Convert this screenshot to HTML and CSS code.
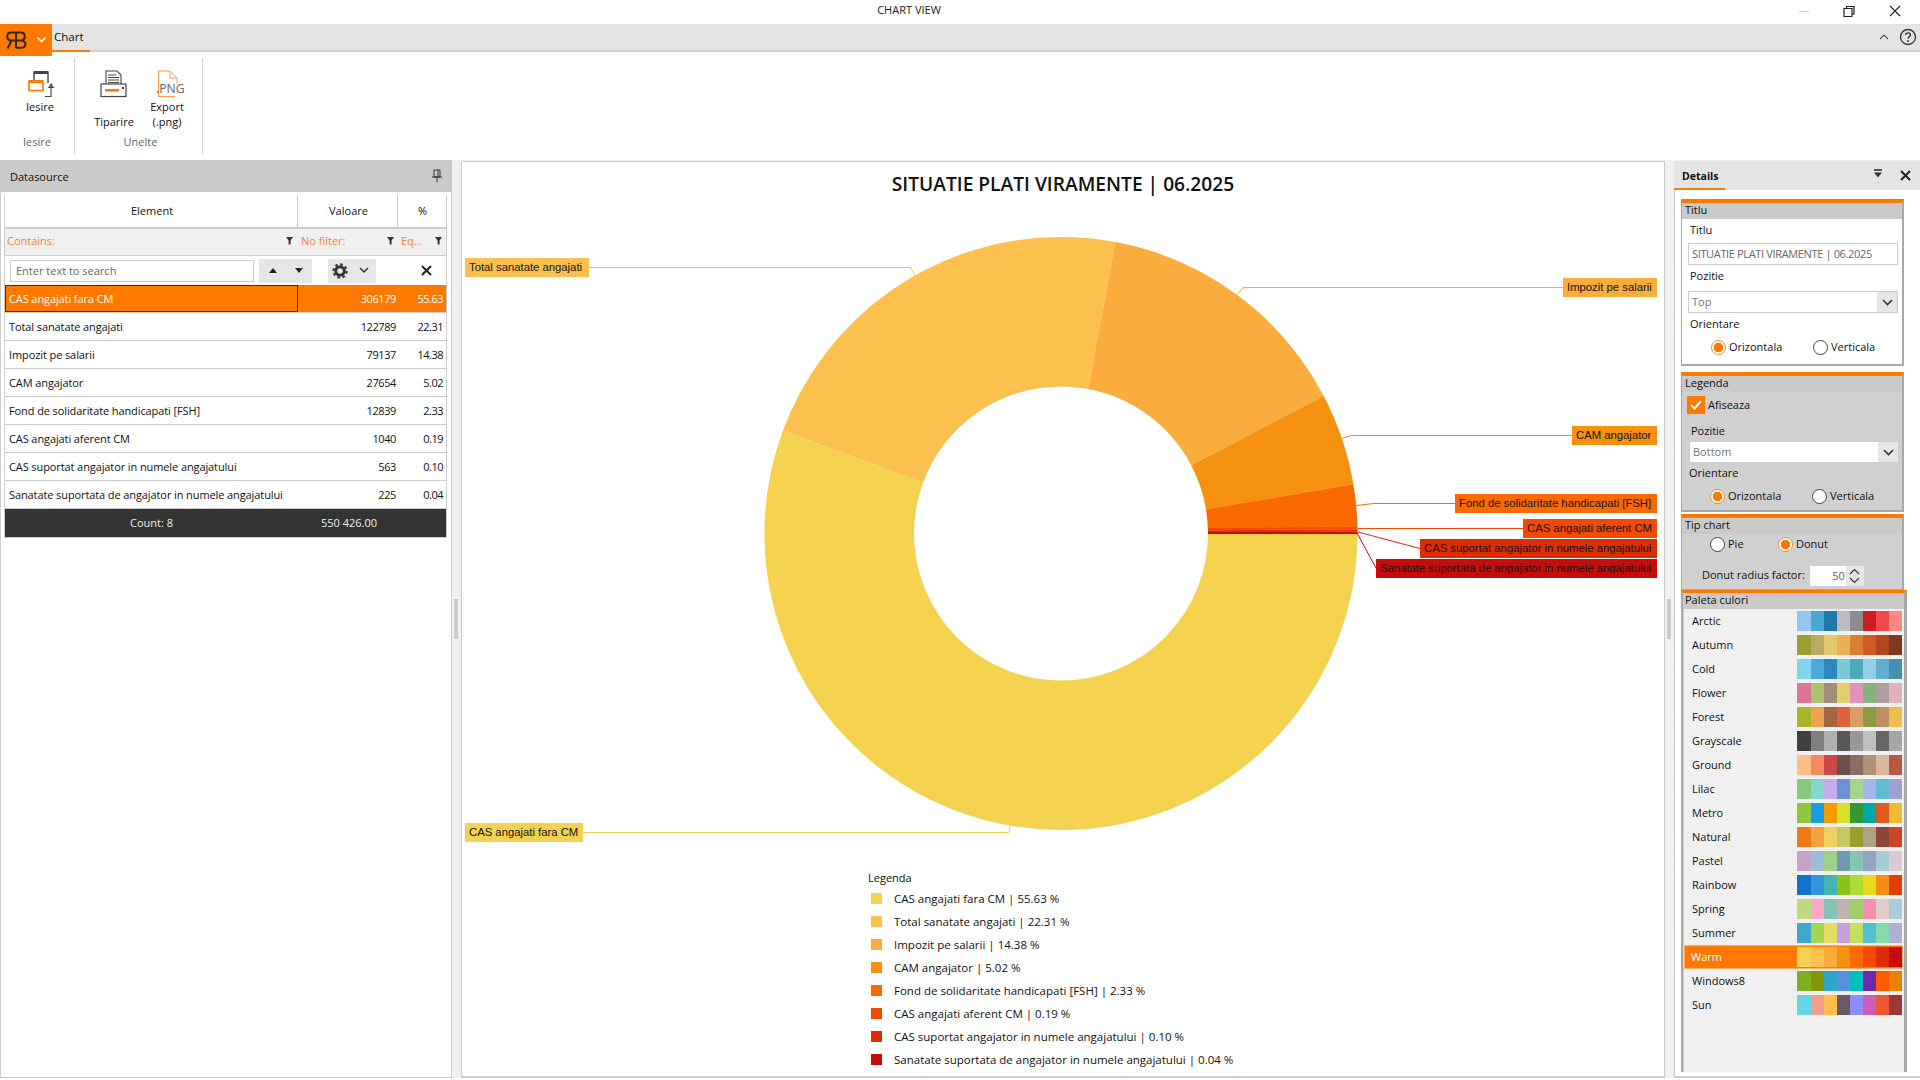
FILE: index.html
```html
<!DOCTYPE html>
<html lang="ro">
<head>
<meta charset="utf-8">
<title>CHART VIEW</title>
<link rel="stylesheet" href="styles.css">
</head>
<body>
<header class="titlebar">
  <span class="titlebar-text">CHART VIEW</span>
  <div class="winbtns">
    <svg class="winbtn" width="46" height="24" viewBox="0 0 46 24"><path d="M17 11.5H27" stroke="#c8c8c8" fill="none"/></svg>
    <svg class="winbtn" width="46" height="24" viewBox="0 0 46 24"><path d="M16 8.5H24V16.5H16ZM18.5 8.5V6.5H26V14H24" stroke="#222" stroke-width="1.2" fill="none"/></svg>
    <svg class="winbtn" width="46" height="24" viewBox="0 0 46 24"><path d="M16 6L26 16M26 6L16 16" stroke="#222" stroke-width="1.1" fill="none"/></svg>
  </div>
</header>

<nav class="tabs">
  <div class="appbtn">
    <svg width="52" height="32" viewBox="0 0 52 32">
      <path d="M20 8.5H11.5C8.3 8.5 7.2 10.6 7.2 12.6S8.5 16.6 11.5 16.6H16M16 7.5V24M11.5 16.6L7.5 24.5M16 8.5H20.5C23.6 8.5 24.8 10.2 24.8 12.4S23.6 16.4 20.5 16.4H16M20.5 16.4C24.2 16.4 25.4 18.2 25.4 20.2S23.8 23.8 20.5 23.8H16" fill="none" stroke="#33291f" stroke-width="2"/>
      <path d="M37.5 13.5L41.5 17.5L45.5 13.5" fill="none" stroke="#fff" stroke-width="1.6"/>
    </svg>
  </div>
  <div class="tab">Chart</div>
  <div class="tabs-right">
    <svg width="12" height="10" viewBox="0 0 12 10"><path d="M2 7L6 3L10 7" fill="none" stroke="#555" stroke-width="1.1"/></svg>
    <svg width="18" height="18" viewBox="0 0 18 18"><circle cx="9" cy="9" r="7.5" fill="none" stroke="#333" stroke-width="1.3"/><path d="M6.6 7C6.7 5.6 7.7 4.9 9 4.9S11.4 5.8 11.4 7C11.4 8.7 9 8.8 9 10.6" fill="none" stroke="#333" stroke-width="1.4"/><circle cx="9" cy="13" r=".95" fill="#333"/></svg>
  </div>
</nav>

<section class="ribbon">
  <div class="rgroup rgroup-a">
    <div class="rbuttons">
      <div class="rbtn rbtn-a">
        <svg width="28" height="28" viewBox="0 0 28 28">
          <path d="M6 11V2H20V13" fill="none" stroke="#444" stroke-width="1.4"/>
          <path d="M6 2.5H20" stroke="#444" stroke-width="3"/>
          <rect x="1" y="11" width="14" height="9.5" fill="#fff" stroke="#ff7800" stroke-width="1.6"/>
          <path d="M1 11.5H15" stroke="#ff7800" stroke-width="3"/>
          <path d="M17 26.5H23V15M20.8 17.5L23 14L25.2 17.5Z" fill="none" stroke="#444" stroke-width="1.1"/>
        </svg>
        <span class="rlabel">Iesire</span>
      </div>
    </div>
    <div class="gname">Iesire</div>
  </div>
  <div class="rgroup rgroup-b">
    <div class="rbuttons">
      <div class="rbtn rbtn-b">
        <svg width="28" height="28" viewBox="0 0 28 28">
          <path d="M6 14V1H17L21 5V14" fill="#fff" stroke="#444" stroke-width="1.1"/>
          <path d="M8 5H16M8 7.5H19M8 10H19M8 12.5H19" stroke="#444" stroke-width="1"/>
          <rect x="1" y="14" width="25" height="12.5" fill="#fff" stroke="#444" stroke-width="1.2"/>
          <rect x="5" y="19" width="14" height="2.6" fill="#ff7800"/>
          <rect x="22" y="17" width="2" height="2" fill="#444"/>
        </svg>
        <span class="rlabel"><br>Tiparire</span>
      </div>
      <div class="rbtn rbtn-c">
        <svg width="30" height="28" viewBox="0 0 30 28">
          <path d="M6 26.5H3.5V1H15L22 8V14M15 1V8H22M20 26.5H6" fill="none" stroke="#ff9a40" stroke-width="1"/>
          <text class="png-text" x="1" y="23">.PNG</text>
        </svg>
        <span class="rlabel">Export<br>(.png)</span>
      </div>
    </div>
    <div class="gname">Unelte</div>
  </div>
</section>

<main class="main">
  <aside class="left">
    <div class="left-head">
      <span>Datasource</span>
      <svg width="12" height="14" viewBox="0 0 12 14"><path d="M3 1H9V8H3ZM1 8H11M6 8V13.5M7 1V8" fill="none" stroke="#333" stroke-width="1"/></svg>
    </div>
    <div class="grid">
      <div class="row head-row">
        <div class="hcell">Element</div>
        <div class="hcell">Valoare</div>
        <div class="hcell hcell-last">%</div>
      </div>
      <div class="row filter-row">
        <div class="fcell"><span>Contains:</span><svg class="funnel" width="8" height="8" viewBox="0 0 8 8"><path d="M0 0H7L4.6 3.4V7.5H2.6V3.4Z" fill="#333"/></svg></div>
        <div class="fcell"><span>No filter:</span><svg class="funnel" width="8" height="8" viewBox="0 0 8 8"><path d="M0 0H7L4.6 3.4V7.5H2.6V3.4Z" fill="#333"/></svg></div>
        <div class="fcell"><span>Eq...</span><svg class="funnel" width="8" height="8" viewBox="0 0 8 8"><path d="M0 0H7L4.6 3.4V7.5H2.6V3.4Z" fill="#333"/></svg></div>
      </div>
      <div class="searchbar">
        <div class="search-input">Enter text to search</div>
        <div class="sbtns">
          <svg width="8" height="5" viewBox="0 0 8 5"><path d="M0 5L4 0L8 5Z" fill="#222"/></svg>
          <svg width="8" height="5" viewBox="0 0 8 5"><path d="M0 0H8L4 5Z" fill="#222"/></svg>
        </div>
        <div class="gearbtn">
          <svg width="16" height="16" viewBox="0 0 16 16"><circle cx="8" cy="8" r="4.3" fill="none" stroke="#333" stroke-width="3"/><circle cx="8" cy="8" r="6.6" fill="none" stroke="#333" stroke-width="2.2" stroke-dasharray="2.6 2.58"/></svg>
          <svg width="10" height="7" viewBox="0 0 10 7"><path d="M1 1L5 5L9 1" fill="none" stroke="#333" stroke-width="1.5"/></svg>
        </div>
        <svg class="search-x" width="11" height="11" viewBox="0 0 11 11"><path d="M1 1L10 10M10 1L1 10" stroke="#222" stroke-width="2"/></svg>
      </div>
      <div class="row data-row selected"><div class="cell cell-name focused">CAS angajati fara CM</div><div class="cell cell-num">306179</div><div class="cell cell-pct">55.63</div></div>
      <div class="row data-row"><div class="cell cell-name">Total sanatate angajati</div><div class="cell cell-num">122789</div><div class="cell cell-pct">22.31</div></div>
      <div class="row data-row"><div class="cell cell-name">Impozit pe salarii</div><div class="cell cell-num">79137</div><div class="cell cell-pct">14.38</div></div>
      <div class="row data-row"><div class="cell cell-name">CAM angajator</div><div class="cell cell-num">27654</div><div class="cell cell-pct">5.02</div></div>
      <div class="row data-row"><div class="cell cell-name">Fond de solidaritate handicapati [FSH]</div><div class="cell cell-num">12839</div><div class="cell cell-pct">2.33</div></div>
      <div class="row data-row"><div class="cell cell-name">CAS angajati aferent CM</div><div class="cell cell-num">1040</div><div class="cell cell-pct">0.19</div></div>
      <div class="row data-row"><div class="cell cell-name">CAS suportat angajator in numele angajatului</div><div class="cell cell-num">563</div><div class="cell cell-pct">0.10</div></div>
      <div class="row data-row"><div class="cell cell-name">Sanatate suportata de angajator in numele angajatului</div><div class="cell cell-num">225</div><div class="cell cell-pct">0.04</div></div>
      <div class="row foot-row"><div class="fcount">Count: 8</div><div class="fcount">550 426.00</div><div></div></div>
    </div>
  </aside>

  <div class="splitter"><div class="grip"></div></div>

  <section class="chart">
    <h1 class="chart-title">SITUATIE PLATI VIRAMENTE | 06.2025</h1>
    <svg class="plot" width="1202" height="663" viewBox="462 207 1202 663">
      <g fill="none" stroke-width="149.5">
        <circle cx="1061" cy="533.5" r="221.75" pathLength="100" stroke="#f4d250" stroke-dasharray="55.63 44.37"/>
        <circle cx="1061" cy="533.5" r="221.75" pathLength="100" stroke="#fbc04e" stroke-dasharray="22.31 77.69" stroke-dashoffset="-55.63"/>
        <circle cx="1061" cy="533.5" r="221.75" pathLength="100" stroke="#faac3c" stroke-dasharray="14.38 85.62" stroke-dashoffset="-77.94"/>
        <circle cx="1061" cy="533.5" r="221.75" pathLength="100" stroke="#f6900f" stroke-dasharray="5.02 94.98" stroke-dashoffset="-92.32"/>
        <circle cx="1061" cy="533.5" r="221.75" pathLength="100" stroke="#fb6a00" stroke-dasharray="2.33 97.67" stroke-dashoffset="-97.34"/>
      </g>
      <polygon points="1357.5,527 1357.5,529.4 1208,530.2 1208,528.3" fill="#f34a00"/>
      <polygon points="1357.5,529.4 1357.5,531.7 1208,532.1 1208,530.2" fill="#dd2e03"/>
      <polygon points="1357.5,531.7 1357.5,534 1208,534 1208,532.1" fill="#c90c0a"/>
      <g fill="none">
        <path d="M589 267.5H910.5L915 276" stroke="#fbc04e"/>
        <path d="M1563 287.5H1243L1237 295" stroke="#faac3c"/>
        <path d="M1572 435.5H1351L1342 438.5" stroke="#f6900f"/>
        <path d="M1455 503.5H1374L1356 505.5" stroke="#fb6a00"/>
        <path d="M1523 528.5H1358" stroke="#f34a00"/>
        <path d="M1420 548.5L1358 532" stroke="#dd2e03"/>
        <path d="M1376 568L1357 533" stroke="#c90c0a"/>
        <path d="M583 832.5H1009L1010 825" stroke="#f4d250"/>
      </g>
      <rect x="465" y="258" width="124" height="19" fill="#fbc04e"/>
      <text class="call" x="469" y="271">Total sanatate angajati</text>
      <rect x="1563" y="278" width="94" height="19" fill="#faac3c"/>
      <text class="call" x="1567" y="291">Impozit pe salarii</text>
      <rect x="1572" y="426" width="85" height="19" fill="#f6900f"/>
      <text class="call" x="1576" y="439">CAM angajator</text>
      <rect x="1455" y="494" width="202" height="19" fill="#fb6a00"/>
      <text class="call" x="1459" y="507">Fond de solidaritate handicapati [FSH]</text>
      <rect x="1523" y="519" width="134" height="19" fill="#f34a00"/>
      <text class="call" x="1527" y="532">CAS angajati aferent CM</text>
      <rect x="1420" y="539" width="237" height="19" fill="#dd2e03"/>
      <text class="call" x="1424" y="552">CAS suportat angajator in numele angajatului</text>
      <rect x="1376" y="559" width="281" height="19" fill="#c90c0a"/>
      <text class="call" x="1380" y="572">Sanatate suportata de angajator in numele angajatului</text>
      <rect x="465" y="823" width="118" height="19" fill="#f4d250"/>
      <text class="call" x="469" y="836">CAS angajati fara CM</text>
    </svg>
    <div class="legend">
      <div class="legend-title">Legenda</div>
      <div class="legend-item"><i class="lg lg1"></i><span>CAS angajati fara CM | 55.63 %</span></div>
      <div class="legend-item"><i class="lg lg2"></i><span>Total sanatate angajati | 22.31 %</span></div>
      <div class="legend-item"><i class="lg lg3"></i><span>Impozit pe salarii | 14.38 %</span></div>
      <div class="legend-item"><i class="lg lg4"></i><span>CAM angajator | 5.02 %</span></div>
      <div class="legend-item"><i class="lg lg5"></i><span>Fond de solidaritate handicapati [FSH] | 2.33 %</span></div>
      <div class="legend-item"><i class="lg lg6"></i><span>CAS angajati aferent CM | 0.19 %</span></div>
      <div class="legend-item"><i class="lg lg7"></i><span>CAS suportat angajator in numele angajatului | 0.10 %</span></div>
      <div class="legend-item"><i class="lg lg8"></i><span>Sanatate suportata de angajator in numele angajatului | 0.04 %</span></div>
    </div>
  </section>

  <div class="splitter"><div class="grip"></div></div>

  <aside class="details">
    <div class="details-head">
      <div class="details-tab">Details</div>
      <svg class="dh-drop" width="10" height="10" viewBox="0 0 10 10"><path d="M1 1H9" stroke="#333" stroke-width="1.6"/><path d="M1 3.5H9L5 8.5Z" fill="#333"/></svg>
      <svg class="dh-close" width="11" height="11" viewBox="0 0 11 11"><path d="M1 1L10 10M10 1L1 10" stroke="#222" stroke-width="2"/></svg>
    </div>
    <div class="details-body">
      <section class="box box-white box-titlu">
        <div class="box-head">Titlu</div>
        <div class="flabel flabel-a">Titlu</div>
        <div class="input input-a">SITUATIE PLATI VIRAMENTE | 06.2025</div>
        <div class="flabel flabel-a">Pozitie</div>
        <div class="combo combo-a"><span>Top</span><div class="dropbtn"><svg width="11" height="7" viewBox="0 0 11 7"><path d="M1 1L5.5 5.5L10 1" fill="none" stroke="#333" stroke-width="1.6"/></svg></div></div>
        <div class="flabel flabel-a">Orientare</div>
        <div class="radios radios-a">
          <div class="ritem"><i class="radio on"></i><span>Orizontala</span></div>
          <div class="ritem"><i class="radio"></i><span>Verticala</span></div>
        </div>
      </section>

      <section class="box box-legenda">
        <div class="box-head">Legenda</div>
        <div class="check-row">
          <svg class="check" width="18" height="18" viewBox="0 0 18 18"><rect width="18" height="18" fill="#ff7800"/><path d="M4 9L7.5 12.5L14 5" fill="none" stroke="#fff" stroke-width="2"/></svg>
          <span>Afiseaza</span>
        </div>
        <div class="flabel flabel-b">Pozitie</div>
        <div class="combo combo-b"><span>Bottom</span><div class="dropbtn"><svg width="11" height="7" viewBox="0 0 11 7"><path d="M1 1L5.5 5.5L10 1" fill="none" stroke="#333" stroke-width="1.6"/></svg></div></div>
        <div class="flabel flabel-c">Orientare</div>
        <div class="radios radios-b">
          <div class="ritem"><i class="radio on"></i><span>Orizontala</span></div>
          <div class="ritem"><i class="radio"></i><span>Verticala</span></div>
        </div>
      </section>

      <section class="box box-tip">
        <div class="box-head">Tip chart</div>
        <div class="radios radios-c">
          <div class="ritem"><i class="radio"></i><span>Pie</span></div>
          <div class="ritem"><i class="radio on"></i><span>Donut</span></div>
        </div>
        <div class="spin-row">
          <span>Donut radius factor:</span>
          <div class="spin">
            <div class="spin-val">50</div>
            <div class="spin-btns">
              <svg width="11" height="7" viewBox="0 0 11 7"><path d="M1 6L5.5 1.5L10 6" fill="none" stroke="#333" stroke-width="1.1"/></svg>
              <svg width="11" height="7" viewBox="0 0 11 7"><path d="M1 1L5.5 5.5L10 1" fill="none" stroke="#333" stroke-width="1.1"/></svg>
            </div>
          </div>
        </div>
      </section>

      <section class="box box-paleta">
        <div class="box-head">Paleta culori</div>
        <div class="palette">
          <div class="pal"><span>Arctic</span><div class="sw"><i style="background:#8fc7ee"></i><i style="background:#4aa6d6"></i><i style="background:#1f79aa"></i><i style="background:#b8bdc5"></i><i style="background:#8c8c8c"></i><i style="background:#cf1c23"></i><i style="background:#f04a4f"></i><i style="background:#ff8681"></i></div></div>
          <div class="pal"><span>Autumn</span><div class="sw"><i style="background:#9a9e35"></i><i style="background:#bdaa62"></i><i style="background:#e2c870"></i><i style="background:#ebb252"></i><i style="background:#dc7e32"></i><i style="background:#d05b24"></i><i style="background:#b14721"></i><i style="background:#7d3822"></i></div></div>
          <div class="pal"><span>Cold</span><div class="sw"><i style="background:#82d3f0"></i><i style="background:#4aaada"></i><i style="background:#2a8abe"></i><i style="background:#7dc8d4"></i><i style="background:#4cabba"></i><i style="background:#98cee5"></i><i style="background:#60afd0"></i><i style="background:#4391ae"></i></div></div>
          <div class="pal"><span>Flower</span><div class="sw"><i style="background:#dc7499"></i><i style="background:#adc174"></i><i style="background:#9e8e7a"></i><i style="background:#e0d06c"></i><i style="background:#e391ba"></i><i style="background:#86b27e"></i><i style="background:#aaa09c"></i><i style="background:#e0b1b8"></i></div></div>
          <div class="pal"><span>Forest</span><div class="sw"><i style="background:#a9b524"></i><i style="background:#f0a34d"></i><i style="background:#a16740"></i><i style="background:#dc6340"></i><i style="background:#da9e63"></i><i style="background:#8a9e3f"></i><i style="background:#bc9265"></i><i style="background:#f0bc4b"></i></div></div>
          <div class="pal"><span>Grayscale</span><div class="sw"><i style="background:#404040"></i><i style="background:#7f7f7f"></i><i style="background:#b0b0b0"></i><i style="background:#585858"></i><i style="background:#989898"></i><i style="background:#c0c0c0"></i><i style="background:#666666"></i><i style="background:#a6a6a6"></i></div></div>
          <div class="pal"><span>Ground</span><div class="sw"><i style="background:#ffbd8c"></i><i style="background:#f38a60"></i><i style="background:#cc4748"></i><i style="background:#6e4f4c"></i><i style="background:#8a6e60"></i><i style="background:#af9176"></i><i style="background:#d9b79a"></i><i style="background:#b65a47"></i></div></div>
          <div class="pal"><span>Lilac</span><div class="sw"><i style="background:#8ac880"></i><i style="background:#85d7ce"></i><i style="background:#c3acea"></i><i style="background:#6f90d6"></i><i style="background:#a5d588"></i><i style="background:#a5b5ef"></i><i style="background:#60bad2"></i><i style="background:#a2a0d2"></i></div></div>
          <div class="pal"><span>Metro</span><div class="sw"><i style="background:#8ec63f"></i><i style="background:#1a9de0"></i><i style="background:#f69a00"></i><i style="background:#d6e028"></i><i style="background:#339a33"></i><i style="background:#00a8a8"></i><i style="background:#dd5b20"></i><i style="background:#e9bc32"></i></div></div>
          <div class="pal"><span>Natural</span><div class="sw"><i style="background:#ef7a16"></i><i style="background:#f0a343"></i><i style="background:#f0d05e"></i><i style="background:#c6c962"></i><i style="background:#9c9d2f"></i><i style="background:#afa281"></i><i style="background:#8a4638"></i><i style="background:#ce4424"></i></div></div>
          <div class="pal"><span>Pastel</span><div class="sw"><i style="background:#c6a2c7"></i><i style="background:#9dbdd8"></i><i style="background:#9dd088"></i><i style="background:#7399ae"></i><i style="background:#84c6b0"></i><i style="background:#95a2c0"></i><i style="background:#a5cdd5"></i><i style="background:#dacbd2"></i></div></div>
          <div class="pal"><span>Rainbow</span><div class="sw"><i style="background:#1271c9"></i><i style="background:#3295df"></i><i style="background:#43b6b2"></i><i style="background:#8ac31e"></i><i style="background:#aedb35"></i><i style="background:#e7d91b"></i><i style="background:#f58e12"></i><i style="background:#e33e0a"></i></div></div>
          <div class="pal"><span>Spring</span><div class="sw"><i style="background:#bfd882"></i><i style="background:#f9a8c8"></i><i style="background:#85c2b8"></i><i style="background:#c2b2b0"></i><i style="background:#9ecf6a"></i><i style="background:#f58faf"></i><i style="background:#e0cdcb"></i><i style="background:#a5cdde"></i></div></div>
          <div class="pal"><span>Summer</span><div class="sw"><i style="background:#3fa7c8"></i><i style="background:#a0d653"></i><i style="background:#e5dc66"></i><i style="background:#c4a2de"></i><i style="background:#c5e05e"></i><i style="background:#52c0ce"></i><i style="background:#88daaa"></i><i style="background:#afafd9"></i></div></div>
          <div class="pal pal-on"><span>Warm</span><div class="sw"><i style="background:#f4d250"></i><i style="background:#fbc04e"></i><i style="background:#faac3c"></i><i style="background:#f6900f"></i><i style="background:#fb6a00"></i><i style="background:#f34a00"></i><i style="background:#dd2e03"></i><i style="background:#c90c0a"></i></div></div>
          <div class="pal"><span>Windows8</span><div class="sw"><i style="background:#7eaf21"></i><i style="background:#82960d"></i><i style="background:#2fa5c7"></i><i style="background:#5a8fe0"></i><i style="background:#00bdbe"></i><i style="background:#7227b0"></i><i style="background:#ff5b00"></i><i style="background:#e88000"></i></div></div>
          <div class="pal"><span>Sun</span><div class="sw"><i style="background:#66d5e8"></i><i style="background:#ef9e90"></i><i style="background:#ffc04b"></i><i style="background:#675a60"></i><i style="background:#8c8efb"></i><i style="background:#cb5db9"></i><i style="background:#eb5832"></i><i style="background:#a03636"></i></div></div>
        </div>
      </section>
    </div>
  </aside>
</main>
</body>
</html>
```

FILE: styles.css
```css
* { box-sizing: border-box; }
html, body { margin: 0; padding: 0; }
body {
  width: 1920px;
  height: 1080px;
  overflow: hidden;
  display: flex;
  flex-direction: column;
  background: #fff;
  font-family: "Open Sans", "Liberation Sans", sans-serif;
  font-size: 11px;
  color: #111;
}
svg { display: block; flex: none; }

/* title bar */
.titlebar { height: 24px; display: flex; align-items: center; justify-content: center; position: relative; flex: none; padding-right: 102px; }
.titlebar-text { font-size: 11px; color: #222; margin-top: -6px; }
.winbtns { position: absolute; right: 0; top: 0; display: flex; }

/* ribbon tabs */
.tabs { height: 28px; flex: none; background: #e4e4e4; border-bottom: 2px solid #cfcfcf; display: flex; position: relative; }
.appbtn { width: 52px; height: 32px; background: #ff7800; flex: none; position: relative; z-index: 2; }
.tab { width: 38px; height: 28px; border-bottom: 2px solid #ff7800; padding: 4px 0 0 2px; font-size: 11.5px; line-height: 18px; }
.tabs-right { margin-left: auto; display: flex; align-items: center; gap: 9px; padding: 0 3px 0 0; height: 26px; }

/* ribbon */
.ribbon { height: 108px; flex: none; display: flex; padding-top: 6px; background: #fff; }
.rgroup { height: 96px; display: flex; flex-direction: column; border-right: 1px solid #d4d4d4; }
.rgroup-a { width: 75px; }
.rgroup-b { width: 128px; }
.rbuttons { display: flex; height: 76px; }
.rbtn { display: flex; flex-direction: column; align-items: center; padding-top: 12px; }
.rbtn-a { width: 80px; margin-right: -6px; }
.rbtn-a svg { margin-left: 3px; }
.rbtn-b { width: 62px; margin-left: 8px; }
.rbtn-c { width: 44px; }
.rbtn-c svg { margin-left: 6px; }
.rlabel { text-align: center; line-height: 15px; margin-top: 1px; font-size: 11px; }
.png-text { font-family: "Open Sans", sans-serif; font-size: 12.2px; fill: #666; }
.gname { text-align: center; color: #666; line-height: 16px; height: 20px; font-size: 11px; }
.rgroup-b .gname { padding-left: 4px; }

/* main area */
.main { flex: 1; display: flex; background: #f0f0f0; min-height: 0; padding-bottom: 2px; box-shadow: inset 0 -2px 0 #fff; }
.left { width: 452px; flex: none; background: #fff; border: 1px solid #ccc; border-top: 0; display: flex; flex-direction: column; }
.left-head { height: 32px; background: #cacaca; margin: 0 -1px; padding: 0 9px 0 10px; display: flex; align-items: center; justify-content: space-between; font-size: 11px; flex: none; }
.grid { margin: 3px 0 0 3px; width: 443px; border-left: 1px solid #ccc; border-right: 1px solid #ccc; }
.row { display: grid; grid-template-columns: 293px 100px 1fr; }
.head-row { height: 32px; }
.hcell { display: flex; align-items: center; justify-content: center; border-right: 1px solid #ccc; padding: 0 0 2px 2px; }
.hcell-last { border-right: 0; padding-left: 1px; }
.filter-row { height: 29px; background: #f0f0f0; border-top: 2px solid #ccc; border-bottom: 1px solid #ccc; color: #f4833a; line-height: 24px; }
.fcell { display: flex; align-items: center; justify-content: space-between; padding: 0 4px 2px 2px; }
.fcell:nth-child(2), .fcell:nth-child(3) { padding-left: 3px; padding-right: 3px; }
.funnel { margin-top: -1px; }
.searchbar { height: 29px; display: flex; align-items: center; position: relative; padding-left: 5px; }
.search-input { width: 244px; height: 22px; border: 1px solid #ccc; line-height: 20px; padding-left: 5px; color: #666; flex: none; }
.sbtns { width: 53px; height: 24px; margin-left: 5px; background: #e6e6e6; display: flex; align-items: center; justify-content: space-between; padding: 0 9px 0 10px; flex: none; }
.gearbtn { width: 48px; height: 24px; margin-left: 16px; background: #e6e6e6; display: flex; align-items: center; justify-content: space-between; padding: 0 7px 0 4px; flex: none; }
.search-x { margin-left: 45px; }
.data-row { height: 28px; border-bottom: 1px solid #ccc; line-height: 27px; }
.cell { overflow: hidden; white-space: nowrap; }
.cell-name { padding-left: 4px; letter-spacing: -0.1px; }
.cell-num { text-align: right; padding-right: 2px; letter-spacing: -0.4px; }
.cell-pct { text-align: right; padding-right: 3px; letter-spacing: -0.5px; }
.selected { background: #ff7800; color: #fff; }
.focused { border: 1px solid #333; line-height: 25px; padding-left: 3px; height: 27px; }
.foot-row { height: 29px; background: #333; color: #f0f0f0; border-bottom: 1px solid #ccc; line-height: 27px; }
.fcount { text-align: center; }
.fcount:nth-child(2) { padding-left: 2px; }

/* splitters */
.splitter { width: 9px; flex: none; position: relative; display: flex; align-items: center; padding-left: 2px; }
.grip { width: 4px; height: 40px; background: #ccc; }

/* chart */
.chart { flex: 1; background: #fff; border: 1px solid #ccc; border-bottom-width: 2px; margin-top: 1px; display: flex; flex-direction: column; min-width: 0; }
.chart-title { margin: 0; height: 45px; text-align: center; font-size: 19.2px; font-weight: 600; line-height: 44px; color: #111; flex: none; }
.plot { flex: none; }
.call { font-family: "Liberation Sans", sans-serif; font-size: 11.3px; fill: #111; }
.legend { padding: 0 0 0 406px; }
.legend-title { height: 17px; line-height: 16px; }
.legend-item { height: 23px; display: flex; align-items: center; font-size: 11.5px; font-weight: 500; }
.lg { width: 11px; height: 11px; margin: 0 12px 0 3px; flex: none; }
.lg1 { background: #f4d250; }
.lg2 { background: #fbc04e; }
.lg3 { background: #faac3c; }
.lg4 { background: #f6900f; }
.lg5 { background: #fb6a00; }
.lg6 { background: #f34a00; }
.lg7 { background: #dd2e03; }
.lg8 { background: #c90c0a; }

/* details */
.details { width: 246px; flex: none; display: flex; flex-direction: column; background: #fff; margin-top: 1px; border-left: 1px solid #ccc; border-bottom: 2px solid #ccc; }
.details-head { height: 29px; background: #e4e4e4; display: flex; align-items: center; flex: none; margin-left: -1px; }
.details-tab { width: 51px; height: 29px; border-bottom: 2px solid #ff7800; font-weight: 700; padding: 6px 0 0 8px; line-height: 18px; font-size: 10.5px; }
.dh-drop { margin-left: 148px; margin-top: -4px; }
.dh-close { margin-left: 17px; }
.details-body { flex: 1; padding: 9px 0 0 6px; min-height: 0; display: flex; flex-direction: column; }
.box { width: 223px; border: 1px solid #a8a8a8; border-top: 4px solid #ff7800; border-right-width: 2px; background: #d0d0d0; flex: none; }
.box-white { background: #fff; }
.box-head { height: 16px; line-height: 14px; background: #cacaca; padding-left: 3px; font-size: 11px; }
.box-titlu { height: 167px; border-bottom-width: 2px; }
.box-legenda { height: 140px; margin-top: 6px; border-bottom-width: 2px; }
.box-tip { height: 76px; margin-top: 2px; }
.box-paleta { width: 226px; flex: 1; border-top-width: 3px; border-left-width: 2px; border-right-width: 3px; border-bottom: 0; margin-bottom: 5px; }
.box-paleta .box-head { padding-left: 2px; }
.flabel { height: 22px; line-height: 21px; }
.flabel-a { padding-left: 8px; }
.flabel-b { padding-left: 9px; margin-top: 6px; }
.flabel-c { padding-left: 7px; }
.input { height: 22px; margin: 2px 0 0 6px; width: 210px; border: 1px solid #ccc; line-height: 20px; padding-left: 3px; color: #666; font-size: 11px; white-space: nowrap; overflow: hidden; letter-spacing: -0.35px; }
.combo { display: flex; height: 22px; line-height: 20px; color: #777; }
.combo span { flex: 1; padding-left: 3px; }
.combo-a { width: 210px; margin: 4px 0 0 6px; border: 1px solid #ccc; }
.combo-b { width: 208px; margin-left: 8px; height: 20px; background: #fff; }
.dropbtn { width: 20px; background: #e6e6e6; display: flex; align-items: center; justify-content: center; flex: none; }
.input-a { background: #fff; }
.radios { display: flex; height: 22px; align-items: center; }
.radios-a { margin-top: 1px; padding-left: 29px; }
.radios-b { margin-top: 1px; padding-left: 28px; }
.radios-c { height: 20px; padding-left: 28px; }
.ritem { display: flex; align-items: center; flex: none; width: 102px; gap: 3px; }
.ritem span { margin-top: -2px; }
.radios-c .ritem { width: 68px; }
.radio { width: 15px; height: 15px; border-radius: 50%; border: 1px solid #444; background: #fff; flex: none; position: relative; }
.radio.on { border: 1.5px solid #ff8a20; background: radial-gradient(circle, #ff7800 0 4.5px, #fff 5px); }
.check-row { display: flex; align-items: center; gap: 3px; height: 18px; margin: 4px 0 0 5px; }
.check-row span { margin-top: -2px; }
.spin-row { display: flex; align-items: center; height: 20px; margin-top: 12px; padding-left: 20px; line-height: 18px; }
.spin-row > span { margin-top: -2px; }
.spin { display: flex; width: 54px; height: 20px; margin-left: 5px; }
.spin-val { width: 36px; background: #fff; text-align: right; padding-right: 1px; line-height: 20px; color: #666; }
.spin-btns { width: 18px; background: #e6e6e6; display: flex; flex-direction: column; align-items: center; justify-content: center; gap: 2px; }

/* palette */
.palette { background: #f0f0f0; height: 463px; margin-left: 1px; }
.pal { height: 24px; display: flex; align-items: center; padding-left: 8px; }
.pal span { width: 105px; flex: none; margin-top: -2px; }
.sw { display: flex; height: 20px; width: 105px; flex: none; }
.sw i { display: block; width: 13px; height: 20px; }
.sw i:first-child { width: 14px; }
.pal-on { background: #ff7800; color: #fff; box-shadow: inset 0 0 0 1px #ffae66; padding-left: 7px; width: 219px; }
.pal-on span { width: 106px; }
```
